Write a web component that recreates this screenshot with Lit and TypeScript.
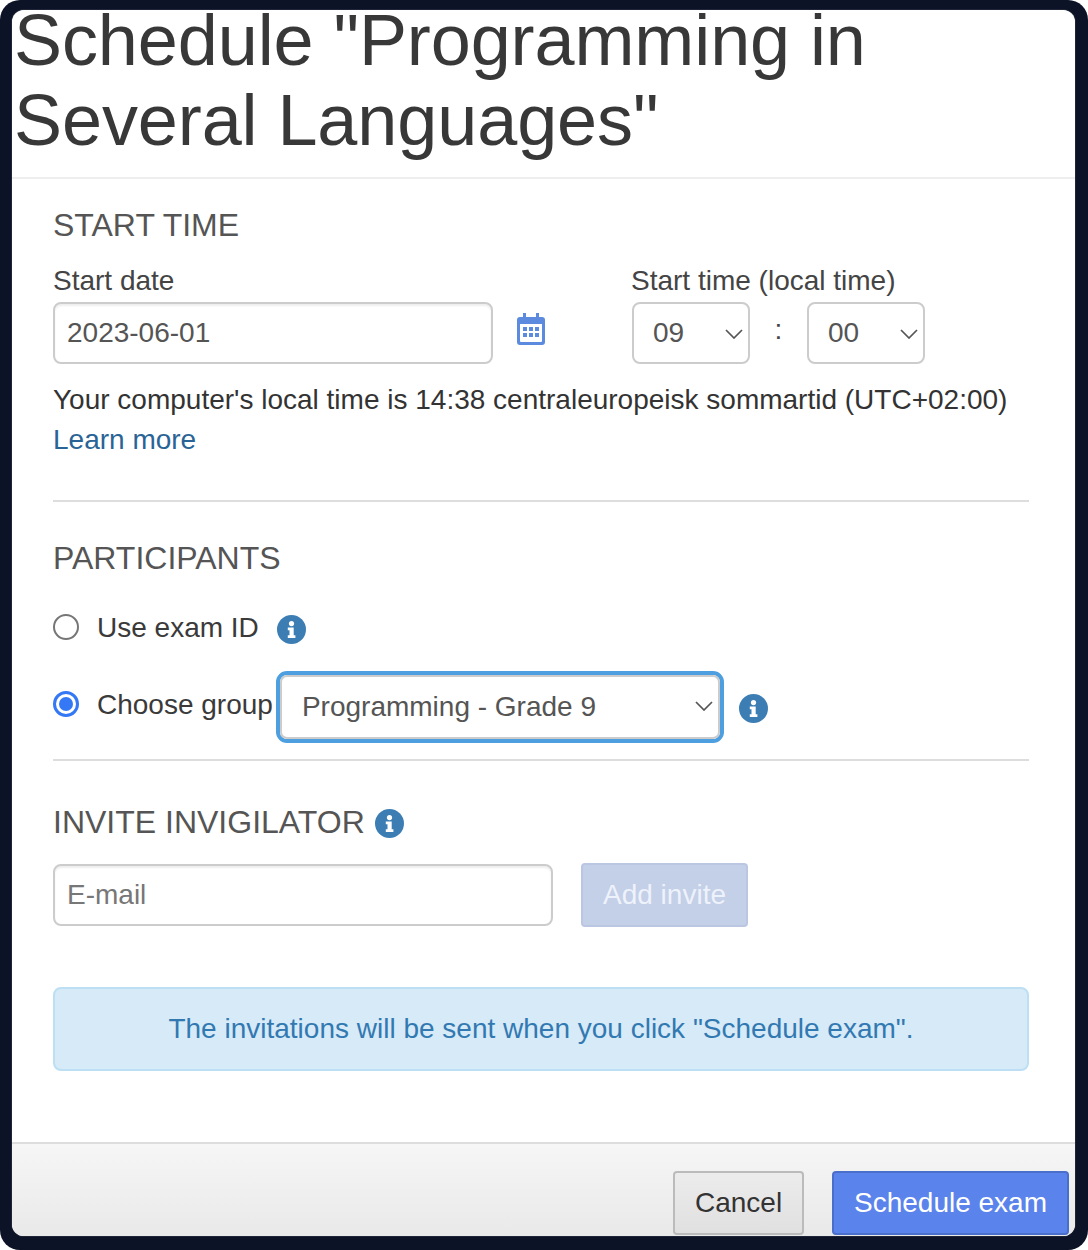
import { LitElement, html, css, svg } from 'lit';
import { customElement } from 'lit/decorators.js';

const chevron = svg`<svg class="chev" width="18" height="10" viewBox="0 0 18 10"><path d="M1 1l8 8 8-8" fill="none" stroke="#555" stroke-width="1.7"/></svg>`;

const info = html`<svg class="info" width="29" height="29" viewBox="0 0 29 29">
  <circle cx="14.5" cy="14.5" r="14.5" fill="#3c7eb4"/>
  <circle cx="14.5" cy="8.6" r="2.6" fill="#fff"/>
  <path d="M10.8 12.6h5.9v7.6h1.7v2.7h-7.6v-2.7h1.7v-4.9h-1.7z" fill="#fff"/>
</svg>`;

@customElement('app-root')
export class AppRoot extends LitElement {
  static styles = css`
    :host {
      display: block;
      width: 1088px;
      height: 1250px;
      background: #fff;
      font-family: "Liberation Sans", Arial, sans-serif;
      font-size: 28px;
      color: #333;
    }
    * { box-sizing: border-box; }
    .frame {
      height: 1250px;
      padding: 10px 13px 14px 12px;
      background: #0d1326;
      border-radius: 20px;
    }
    .modal {
      height: 1226px;
      background: #fff;
      border-radius: 12px;
      box-shadow: 0 0 1px rgba(255, 255, 255, 0.8);
      display: flex;
      flex-direction: column;
    }
    .header {
      height: 169px;
      border-bottom: 2px solid #eee;
      padding-left: 2px;
    }
    h3 {
      margin: -10px 0 0;
      font-size: 72px;
      line-height: 80px;
      letter-spacing: -0.09px;
      font-weight: 400;
      color: #383838;
    }
    .body {
      flex: 1;
      padding: 0 46px 0 41px;
    }
    h4 {
      margin: 0;
      font-size: 32px;
      line-height: 40px;
      font-weight: 400;
      color: #555;
    }
    .start h4 { margin-top: 26px; }
    .time-row { display: flex; margin-top: 16px; }
    .date-col { width: 578px; }
    label { display: block; line-height: 40px; height: 41px; color: #444; }
    .date-line { display: flex; align-items: flex-start; }
    input {
      display: block;
      height: 62px;
      border: 2px solid #ccc;
      border-radius: 8px;
      padding: 0 12px;
      font: inherit;
      color: #555;
      background: #fff;
      outline: none;
      box-shadow: inset 0 2px 2px rgba(0, 0, 0, 0.07);
    }
    .date { width: 440px; }
    .cal { margin: 11px 0 0 24px; }
    .selects { display: flex; align-items: flex-start; margin-left: 1px; }
    .select {
      position: relative;
      display: block;
      height: 62px;
    }
    select {
      display: block;
      width: 100%;
      height: 100%;
      appearance: none;
      border: 2px solid #ccc;
      border-radius: 8px;
      background: #fff;
      font: inherit;
      color: #555;
      padding: 0 0 2px 19px;
      outline: none;
    }
    .chev { position: absolute; right: 7px; top: 27px; pointer-events: none; }
    .num { width: 118px; }
    .colon { width: 57px; text-align: center; line-height: 56px; color: #444; }
    .note { margin: 16px 0 0; line-height: 40px; }
    a { color: #2a6496; text-decoration: none; }
    hr { margin: 0; border: 0; border-top: 2px solid #ddd; }
    .note + hr { margin-top: 40px; }
    .participants h4 { margin-top: 36px; }
    .radio-row { display: flex; align-items: center; }
    .radio {
      width: 26px;
      height: 26px;
      border-radius: 50%;
      border: 2px solid #767676;
      background: #fff;
      flex: none;
    }
    .radio.on {
      border: 3px solid #3478f6;
      padding: 3px;
      background: #3478f6 content-box;
    }
    .radio-label { margin-left: 18px; color: #3a3a3a; }
    .row-exam { margin-top: 30px; height: 40px; }
    .row-exam .radio { margin-top: -2px; }
    .row-exam .info { margin: 3px 0 0 18px; }
    .row-group { margin-top: 23px; height: 72px; }
    .row-group .radio-label { margin-top: -4px; }
    .row-group .radio { margin-top: -6px; }
    .focus {
      width: 448px;
      height: 72px;
      margin-left: 3px;
      border-radius: 11px;
      border: 4px solid #4d9fe0;
    }
    .focus select { padding-left: 20px; border-radius: 7px; }
    .focus .chev { top: 26px; }
    .row-group .info { margin-left: 15px; margin-top: 2px; }
    .row-group + hr { margin-top: 16px; }
    .invite-title { display: flex; align-items: center; gap: 10px; margin-top: 41px; }
    .invite-title .info { margin-top: 2px; }
    .invite-row { display: flex; align-items: center; margin-top: 21px; gap: 28px; }
    .email { width: 500px; }
    input::placeholder { color: #777; opacity: 1; }
    .btn {
      height: 64px;
      border-radius: 4px;
      font: inherit;
      padding: 0 20px;
      cursor: pointer;
    }
    .add {
      width: 167px;
      border: 2px solid #bbc7e2;
      background: #c4cfe8;
      color: #eef2fa;
    }
    .alert {
      height: 84px;
      margin-top: 60px;
      background: #d6eaf7;
      border: 2px solid #bcdff3;
      border-radius: 8px;
      display: flex;
      align-items: center;
      justify-content: center;
      color: #3279b2;
    }
    .footer {
      height: 94px;
      border-top: 2px solid #ddd;
      border-radius: 0 0 12px 12px;
      background: linear-gradient(#f6f6f6, #e9e9e9);
      display: flex;
      justify-content: flex-end;
      align-items: flex-start;
      padding: 27px 6px 0 0;
      gap: 28px;
    }
    .cancel {
      width: 131px;
      border: 2px solid #bbb;
      background: linear-gradient(#ececec, #e0e0e0);
      color: #333;
    }
    .schedule {
      width: 237px;
      border: 2px solid #4a6fcb;
      background: #5b83ec;
      color: #fff;
    }
  `;

  render() {
    return html`
      <div class="frame">
        <div class="modal">
          <div class="header"><h3>Schedule "Programming in Several Languages"</h3></div>
          <div class="body">
            <div class="start">
              <h4>START TIME</h4>
              <div class="time-row">
                <div class="date-col">
                  <label>Start date</label>
                  <div class="date-line">
                    <input class="date" value="2023-06-01" />
                    <svg class="cal" width="28" height="32" viewBox="0 0 28 32">
                      <path fill="#5b8ade" fill-rule="evenodd" d="M6 0h3v4h10V0h3v4h3a3 3 0 0 1 3 3v22a3 3 0 0 1-3 3H3a3 3 0 0 1-3-3V7a3 3 0 0 1 3-3h3zM3 11v17a1 1 0 0 0 1 1h20a1 1 0 0 0 1-1V11z"/>
                      <path fill="#5b8ade" d="M6 14h4v4H6zM12 14h4v4h-4zM18 14h4v4h-4zM6 20h4v4H6zM12 20h4v4h-4zM18 20h4v4h-4z"/>
                    </svg>
                  </div>
                </div>
                <div>
                  <label>Start time (local time)</label>
                  <div class="selects">
                    <span class="select num"><select><option>09</option></select>${chevron}</span>
                    <span class="colon">:</span>
                    <span class="select num"><select><option>00</option></select>${chevron}</span>
                  </div>
                </div>
              </div>
              <p class="note">Your computer's local time is 14:38 centraleuropeisk sommartid (UTC+02:00)<br /><a href="#">Learn more</a></p>
              <hr />
            </div>
            <div class="participants">
              <h4>PARTICIPANTS</h4>
              <div class="radio-row row-exam">
                <span class="radio"></span>
                <span class="radio-label">Use exam ID</span>
                ${info}
              </div>
              <div class="radio-row row-group">
                <span class="radio on"></span>
                <span class="radio-label">Choose group</span>
                <span class="select focus"><select><option>Programming - Grade 9</option></select>${chevron}</span>
                ${info}
              </div>
              <hr />
            </div>
            <h4 class="invite-title">INVITE INVIGILATOR ${info}</h4>
            <div class="invite-row">
              <input class="email" placeholder="E-mail" />
              <button class="btn add">Add invite</button>
            </div>
            <div class="alert">The invitations will be sent when you click "Schedule exam".</div>
          </div>
          <div class="footer">
            <button class="btn cancel">Cancel</button>
            <button class="btn schedule">Schedule exam</button>
          </div>
        </div>
      </div>
    `;
  }
}
